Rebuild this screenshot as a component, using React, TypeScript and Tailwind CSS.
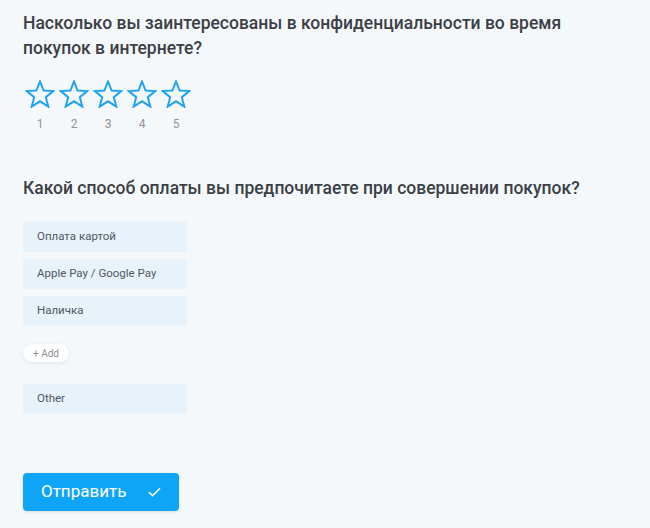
import React from "react";

const options = ["Оплата картой", "Apple Pay / Google Pay", "Наличка"];

function Star() {
  return (
    <svg width="30" height="28" viewBox="0 0 30 28" fill="none">
      <polygon
        points="15,1.5 18.6,10.6 28.3,11.1 20.8,17.2 23.3,26.6 15,21.3 6.7,26.6 9.2,17.2 1.7,11.1 11.4,10.6"
        stroke="#1fa3f2"
        strokeWidth="2"
        strokeLinejoin="miter"
      />
    </svg>
  );
}

export default function App() {
  return (
    <div className="min-h-[528px] w-full bg-[#f5f8fa] px-[23px] pt-[11px] font-['Roboto',sans-serif]">
      <h2 className="max-w-[560px] text-[17.5px] font-medium leading-[25px] text-[#3b3f46]">
        Насколько вы заинтересованы в конфиденциальности во время покупок в интернете?
      </h2>

      <div className="mt-[19px] flex">
        {[1, 2, 3, 4, 5].map((n) => (
          <div key={n} className="flex w-[34px] flex-col items-center">
            <Star />
            <span className="mt-[9px] text-[12px] leading-[14px] text-[#8f9399]">{n}</span>
          </div>
        ))}
      </div>

      <h2 className="mt-[45px] text-[17.5px] font-medium leading-[25px] text-[#3b3f46]">
        Какой способ оплаты вы предпочитаете при совершении покупок?
      </h2>

      <div className="mt-[21px] flex flex-col gap-[7px]">
        {options.map((o) => (
          <div
            key={o}
            className="flex h-[30px] w-[164px] items-center bg-[#e7f2fb] px-[14px] text-[11.5px] text-[#52575e]"
          >
            {o}
          </div>
        ))}
      </div>

      <button className="mt-[18px] flex h-[18px] items-center rounded-full bg-white px-[10px] text-[10px] text-[#8a8f96] shadow-[0_1px_4px_rgba(0,0,0,0.08)]">
        + Add
      </button>

      <div className="mt-[22px] flex h-[30px] w-[164px] items-center bg-[#e7f2fb] px-[14px] text-[11.5px] text-[#52575e]">
        Other
      </div>

      <button className="mt-[59px] flex h-[38px] w-[156px] items-center rounded-[4px] bg-[#0fa5f7] pl-[18px] text-[17px] text-white shadow-[0_1px_3px_rgba(0,0,0,0.12)]">
        <span>Отправить</span>
        <svg className="ml-[22px]" width="13" height="10" viewBox="0 0 13 10" fill="none">
          <path d="M1 5.2 L4.6 8.6 L12 1.2" stroke="white" strokeWidth="1.5" />
        </svg>
      </button>
    </div>
  );
}
